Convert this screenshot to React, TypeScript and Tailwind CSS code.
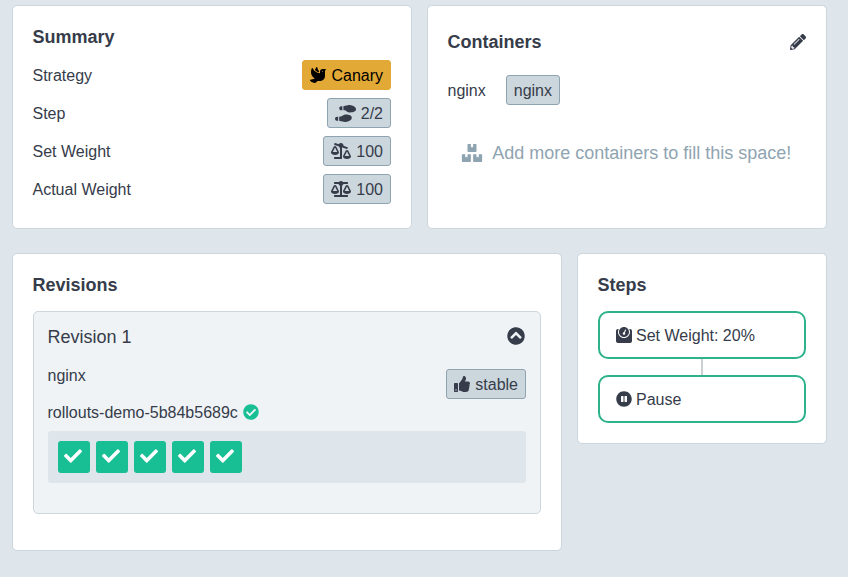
import type { ReactNode } from 'react';
import {
  FaBalanceScale,
  FaBalanceScaleRight,
  FaBoxes,
  FaCheck,
  FaCheckCircle,
  FaChevronCircleUp,
  FaDove,
  FaPauseCircle,
  FaPencilAlt,
  FaShoePrints,
  FaThumbsUp,
  FaWeight,
} from 'react-icons/fa';

function Card({ className, children }: { className: string; children: ReactNode }) {
  return (
    <section className={`rounded-[5px] border border-[#ccd6dd] bg-white pr-5 pl-[19.5px] ${className}`}>
      {children}
    </section>
  );
}

function Tag({ icon, children, canary }: { icon?: ReactNode; children: ReactNode; canary?: boolean }) {
  const tone = canary ? 'border-[#e2a936] bg-[#e2a936] text-black' : 'border-[#8fa4b1] bg-[#ccd6dd]';
  return (
    <span className={`flex h-[30px] items-center gap-[5px] rounded-[3px] border px-[7px] ${tone}`}>
      {icon}
      <span className="pt-px">{children}</span>
    </span>
  );
}

function Row({ label, children }: { label: string; children: ReactNode }) {
  return (
    <div className="flex h-[30px] items-center justify-between">
      <span className="pt-px">{label}</span>
      {children}
    </div>
  );
}

function Step({ icon, children }: { icon: ReactNode; children: ReactNode }) {
  return (
    <div className="flex h-12 items-center gap-[4.5px] rounded-[10px] border-2 border-[#2db28c] px-4">
      {icon}
      <span className="pt-px">{children}</span>
    </div>
  );
}

export default function App() {
  return (
    <main className="flex h-[577px] w-[848px] flex-col gap-6 overflow-hidden bg-[#dee6eb] pt-[5px] pl-3 font-['Liberation_Sans',Arial,sans-serif] text-base leading-5 text-[#363c4a]">
      <div className="flex gap-[15px]">
        <Card className="h-[224px] w-[400px] pt-[21px]">
          <h2 className="mb-[13px] text-lg leading-5 font-bold">Summary</h2>
          <div className="flex flex-col gap-2">
            <Row label="Strategy">
              <Tag canary icon={<FaDove size={16} />}>Canary</Tag>
            </Row>
            <Row label="Step">
              <Tag icon={<FaShoePrints className="h-[17px] w-[21px]" />}>2/2</Tag>
            </Row>
            <Row label="Set Weight">
              <Tag icon={<FaBalanceScaleRight className="h-4 w-5" />}>100</Tag>
            </Row>
            <Row label="Actual Weight">
              <Tag icon={<FaBalanceScale className="h-4 w-5" />}>100</Tag>
            </Row>
          </div>
        </Card>
        <Card className="h-[224px] w-[400px] pt-[26px]">
          <div className="flex items-center justify-between">
            <h2 className="text-lg leading-5 font-bold">Containers</h2>
            <FaPencilAlt size={16} />
          </div>
          <div className="mt-[23px] flex items-center gap-5">
            <span className="pt-px">nginx</span>
            <Tag>nginx</Tag>
          </div>
          <div className="mt-[37px] flex items-center justify-center gap-[9px] pr-px text-lg leading-5 text-[#8fa4b1]">
            <FaBoxes className="h-[18px] w-[22px]" />
            <span className="pt-px">Add more containers to fill this space!</span>
          </div>
        </Card>
      </div>
      <div className="flex items-start gap-[15px]">
        <Card className="h-[298px] w-[550px] pt-[21px]">
          <h2 className="mb-4 text-lg leading-5 font-bold">Revisions</h2>
          <div className="h-[203px] rounded-[5px] border border-[#ccd6dd] bg-[#eff3f6] px-[14px] pt-[15px]">
            <div className="flex items-center justify-between">
              <h3 className="text-lg leading-5">Revision 1</h3>
              <FaChevronCircleUp size={18} className="mr-px -mt-[2px]" />
            </div>
            <div className="mt-[18px] flex items-start justify-between">
              <span className="pt-px">nginx</span>
              <div className="mt-[4px]">
                <Tag icon={<FaThumbsUp size={16} />}>stable</Tag>
              </div>
            </div>
            <div className="mt-[3px] flex h-5 items-center gap-[5px]">
              <span className="pt-px">rollouts-demo-5b84b5689c</span>
              <FaCheckCircle size={16} className="text-[#18be94]" />
            </div>
            <div className="mt-[9px] flex h-[52px] items-center gap-1.5 rounded-[3px] bg-[#dee6eb] px-2.5">
              {[1, 2, 3, 4, 5].map((pod) => (
                <span key={pod} className="flex size-8 items-center justify-center rounded-[3px] bg-[#18be94] pr-px pb-0.5 text-white">
                  <FaCheck size={18} />
                </span>
              ))}
            </div>
          </div>
        </Card>
        <Card className="h-[191px] w-[250px] pt-[21px]">
          <h2 className="mb-4 text-lg leading-5 font-bold">Steps</h2>
          <Step icon={<FaWeight size={16} />}>Set Weight: 20%</Step>
          <div className="mx-auto h-4 w-0.5 bg-[#ccd0d5]" />
          <Step icon={<FaPauseCircle size={16} />}>Pause</Step>
        </Card>
      </div>
    </main>
  );
}
